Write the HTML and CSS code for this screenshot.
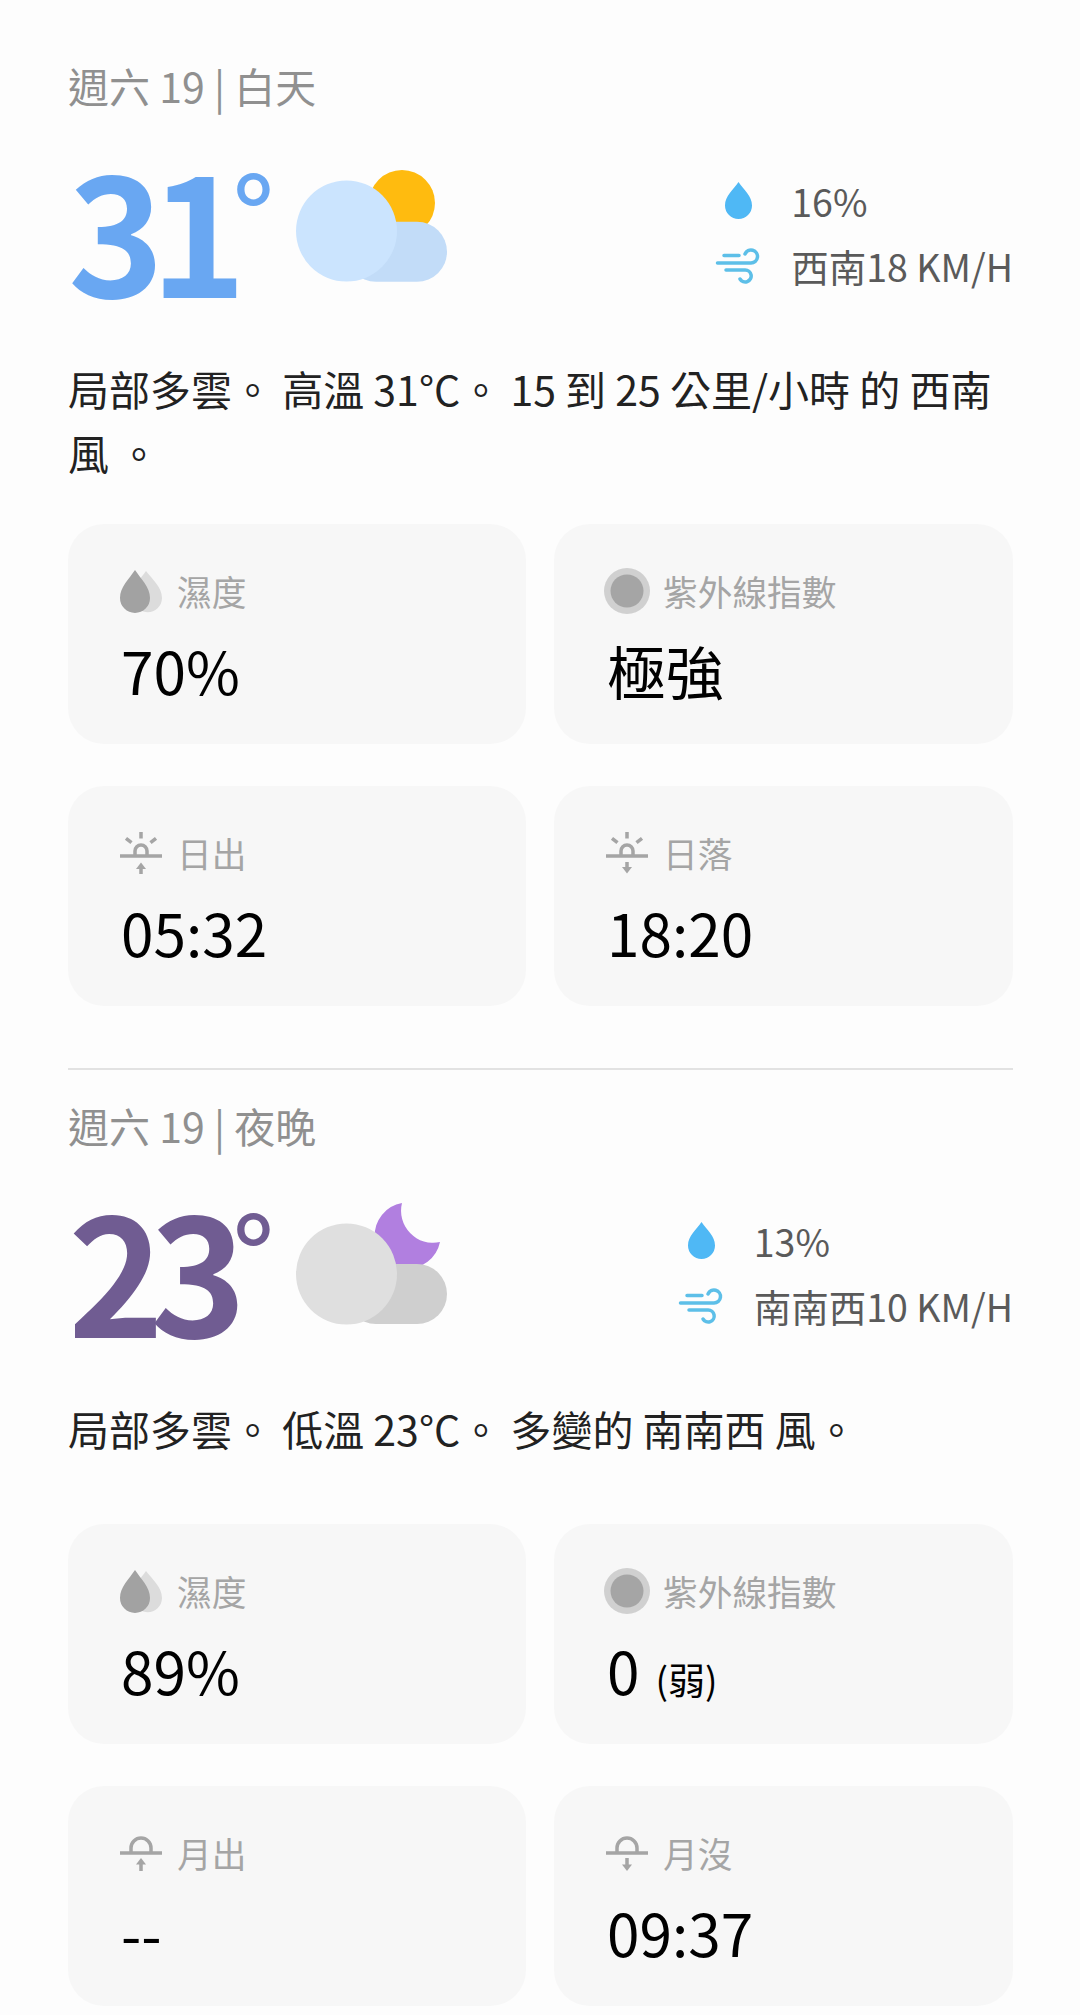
FILE: index.html
```html
<!DOCTYPE html>
<html lang="zh-Hant">
<head>
<meta charset="utf-8">
<title>天氣</title>
<link rel="stylesheet" href="styles.css">
</head>
<body>
<main class="page">
<section class="day">
  <h2 class="heading">週六 19 | 白天</h2>
  <div class="hero">
    <div class="temp temp-day"><span class="num">31</span><span class="deg">°</span></div>
    <svg class="cond" viewBox="0 0 156 130"><circle cx="106" cy="48" r="33" fill="#ffbb0f"/><rect x="50" y="66.7" width="101" height="60" rx="30" fill="#c2dcf8"/><circle cx="50.5" cy="76" r="50.5" fill="#cbe4fe"/></svg>
    <div class="stats">
      <div class="stat"><svg class="stat-icon" viewBox="0 0 48 40"><path d="M24.5 1C19 9 11 15 11 24.5A13.5 13.5 0 0 0 38 24.5C38 15 30 9 24.5 1Z" fill="#4fb8f5"/></svg><span>16%</span></div>
      <div class="stat"><svg class="stat-icon" viewBox="0 0 48 40"><path class="wind" d="M10 9.5H25M3.5 17H37a6.5 6.5 0 1 0-6-9M12 24H31a6 6 0 1 1-5 9"/></svg><span>西南18 KM/H</span></div>
    </div>
  </div>
  <p class="desc">局部多雲。 高溫 31°C。 15 到 25 公里/小時 的 西南 風 。</p>
  <div class="cards">
    <div class="card"><div class="label"><svg class="ic" viewBox="0 0 46 46"><path d="M28 3C23 10 15 18 15 29.5A14.5 14.5 0 0 0 44 30C44 19 34 11 28 3Z" fill="#dcdcdc"/><path d="M17 2C11 11 2 19 2 30A15 15 0 0 0 32 30C32 19 23 11 17 2Z" fill="#a2a2a2"/></svg><span>濕度</span></div><div class="value">70%</div></div>
    <div class="card"><div class="label"><svg class="ic" viewBox="0 0 46 46"><circle cx="23" cy="23" r="23" fill="#d0d0d0"/><circle cx="23" cy="23" r="16.5" fill="#a5a5a5"/></svg><span>紫外線指數</span></div><div class="value">極強</div></div>
    <div class="card"><div class="label"><svg class="ic" viewBox="0 0 46 46"><path class="thin" d="M2 26H44M17 26V21a6 6 0 0 1 12 0V26M23 2V8.5M8 8.3l5.500 4.400M38 8.3l-5.500 4.400M23 44V37"/><path d="M23 32.5l5 6.500h-10Z" fill="#a5a5a5"/></svg><span>日出</span></div><div class="value">05:32</div></div>
    <div class="card"><div class="label"><svg class="ic" viewBox="0 0 46 46"><path class="thin" d="M2 26H44M17 26V21a6 6 0 0 1 12 0V26M23 2V8.5M8 8.3l5.500 4.400M38 8.3l-5.500 4.400M23 32V38"/><path d="M23 43.5l5-6.500h-10Z" fill="#a5a5a5"/></svg><span>日落</span></div><div class="value">18:20</div></div>
  </div>
</section>
<hr class="rule">
<section class="night">
  <h2 class="heading">週六 19 | 夜晚</h2>
  <div class="hero">
    <div class="temp temp-night"><span class="num">23</span><span class="deg">°</span></div>
    <svg class="cond cond-night" viewBox="0 0 156 130"><path d="M106 5A33 33 0 1 0 144 44A32 32 0 0 1 106 5Z" fill="#b17fe0"/><rect x="50" y="66" width="101" height="60" rx="30" fill="#cfcfcf"/><circle cx="50.5" cy="76" r="50.5" fill="#dfdfdf"/></svg>
    <div class="stats">
      <div class="stat"><svg class="stat-icon" viewBox="0 0 48 40"><path d="M24.5 1C19 9 11 15 11 24.5A13.5 13.5 0 0 0 38 24.5C38 15 30 9 24.5 1Z" fill="#4fb8f5"/></svg><span>13%</span></div>
      <div class="stat"><svg class="stat-icon" viewBox="0 0 48 40"><path class="wind" d="M10 9.5H25M3.5 17H37a6.5 6.5 0 1 0-6-9M12 24H31a6 6 0 1 1-5 9"/></svg><span>南南西10 KM/H</span></div>
    </div>
  </div>
  <p class="desc desc-short">局部多雲。 低溫 23°C。 多變的 南南西 風。</p>
  <div class="cards">
    <div class="card"><div class="label"><svg class="ic" viewBox="0 0 46 46"><path d="M28 3C23 10 15 18 15 29.5A14.5 14.5 0 0 0 44 30C44 19 34 11 28 3Z" fill="#dcdcdc"/><path d="M17 2C11 11 2 19 2 30A15 15 0 0 0 32 30C32 19 23 11 17 2Z" fill="#a2a2a2"/></svg><span>濕度</span></div><div class="value">89%</div></div>
    <div class="card"><div class="label"><svg class="ic" viewBox="0 0 46 46"><circle cx="23" cy="23" r="23" fill="#d0d0d0"/><circle cx="23" cy="23" r="16.5" fill="#a5a5a5"/></svg><span>紫外線指數</span></div><div class="value">0 <small class="sub">(弱)</small></div></div>
    <div class="card"><div class="label"><svg class="ic" viewBox="0 0 46 46"><path class="thin" d="M2 23H44M13 23V18a10 10 0 0 1 20 0V23M23 41V33"/><path d="M23 28l5 6.500h-10Z" fill="#a5a5a5"/></svg><span>月出</span></div><div class="value">--</div></div>
    <div class="card"><div class="label"><svg class="ic" viewBox="0 0 46 46"><path class="thin" d="M2 23H44M13 23V18a10 10 0 0 1 20 0V23M23 28V36"/><path d="M23 41l5-6.500h-10Z" fill="#a5a5a5"/></svg><span>月沒</span></div><div class="value">09:37</div></div>
  </div>
</section>
</main>
</body>
</html>
```
FILE: styles.css
```css
html, body { margin: 0; padding: 0; background: #fdfdfd; }
body { font-family: "Noto Sans CJK TC", "Noto Sans", sans-serif; width: 1080px; height: 2015px; overflow: hidden; }
.page { padding: 55px 67px 0 68px; }
.heading { margin: 0; font-size: 41px; line-height: 60px; font-weight: 400; color: #909090; }
.hero { display: flex; align-items: flex-start; height: 146px; margin-top: 40px; }
.temp { display: flex; width: 228px; flex: none; }
.num { font-size: 163px; font-weight: 700; line-height: 144px; letter-spacing: -14px; }
.deg { font-size: 110px; line-height: 110px; font-weight: 500; margin-left: 0; }
.temp-day { color: #69a7f2; }
.temp-night { color: #705c92; }
.cond { width: 156px; height: 130px; flex: none; }
.cond-night { margin-top: 3px; }
.stats { margin-left: auto; display: flex; flex-direction: column; padding-top: 13px; }
.stat { display: flex; align-items: center; gap: 29px; height: 65px; font-size: 37.5px; color: #5a5a5a; white-space: nowrap; }
.stat-icon { width: 48px; height: 40px; flex: none; }
.wind { fill: none; stroke: #5dbfe8; stroke-width: 3.5; stroke-linecap: round; }
.desc { margin: 55px 0 40px; font-size: 41px; line-height: 64px; color: #222; }
.desc-short { margin-bottom: 64px; }
.cards { display: grid; grid-template-columns: 458px 459px; column-gap: 28px; row-gap: 42px; }
.card { height: 220px; box-sizing: border-box; background: #f7f7f7; border-radius: 36px; padding: 44px 0 0 50px; }
.label { display: flex; align-items: center; gap: 13px; height: 46px; font-size: 34.7px; color: #a5a5a5; }
.ic { width: 46px; height: 46px; flex: none; }
.thin { fill: none; stroke: #a5a5a5; stroke-width: 3.5; }
.value { font-size: 58.5px; line-height: 84px; color: #000; margin-left: 3px; margin-top: 14px; }
.sub { font-size: 37px; margin-left: 3px; }
.rule { border: 0; height: 2px; background: #e2e2e2; margin: 62px 0 25px; }
```
